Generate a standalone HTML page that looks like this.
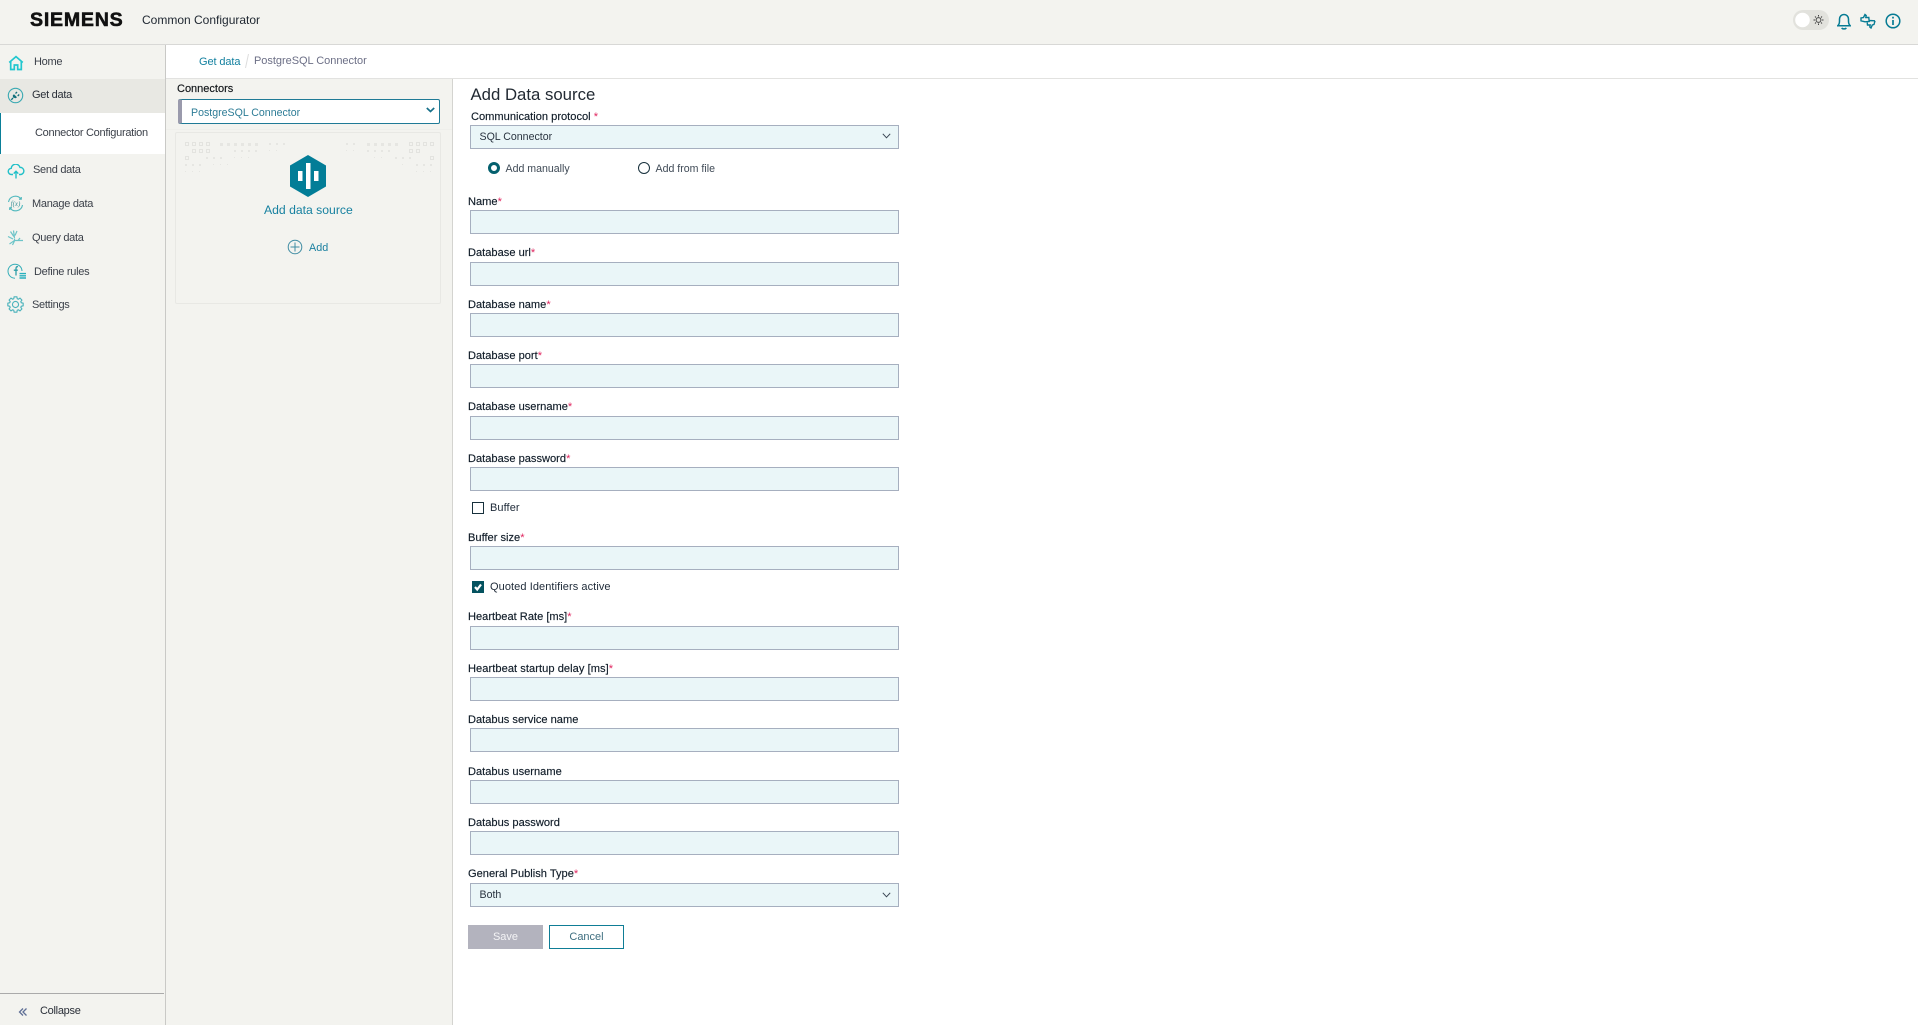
<!DOCTYPE html>
<html lang="en"><head><meta charset="utf-8"><title>Common Configurator</title>
<style>
html,body{margin:0;padding:0;background:#fff}
#p{position:relative;width:1918px;height:1025px;overflow:hidden;background:#fff;font-family:"Liberation Sans",sans-serif}
#p div,#p span.t,#p svg{position:absolute;display:block}
.t{white-space:nowrap;line-height:16px;height:16px;margin-top:1px}
.n{font-size:11px;letter-spacing:-.28px;color:#3a3f48}
.l{font-size:11.1px;color:#101c28;left:468px;-webkit-text-stroke:.15px #101c28}
.l i{font-style:normal;color:#e0245e;-webkit-text-stroke:0}
.f{left:470px;width:429px;height:24px;box-sizing:border-box;background:#eaf6f8;border:1px solid #a6afbf}
.v{font-size:10.6px;color:#2a3440}
.c{font-size:11px;letter-spacing:.08px;color:#1e2a38}
</style></head><body><div id="p">
<div style="left:0;top:0;width:1918px;height:44px;background:#f3f3ef"></div>
<div style="left:0;top:44px;width:1918px;height:1px;background:#d8d8d6"></div>
<div style="left:0;top:45px;width:165px;height:980px;background:#f3f3ef"></div>
<div style="left:165px;top:45px;width:1px;height:980px;background:#c9c9c6"></div>
<div style="left:0;top:79px;width:165px;height:34px;background:#e8e8e3"></div>
<div style="left:0;top:113px;width:165px;height:41px;background:#fff"></div>
<div style="left:0;top:113px;width:1px;height:41px;background:#0a7f98"></div>
<div style="left:0;top:993px;width:164px;height:1px;background:#aaaaaa"></div>
<div style="left:166px;top:78px;width:1752px;height:1px;background:#e2e2e0"></div>
<div style="left:166px;top:79px;width:286px;height:946px;background:#f3f3ef"></div>
<div style="left:452px;top:79px;width:1px;height:946px;background:#d4d4d0"></div>
<div style="left:166px;top:129px;width:286px;height:1px;background:#efefeb"></div>

<span class="t" style="left:30px;top:11px;line-height:17px;height:17px;font-size:19.6px;font-weight:700;letter-spacing:.75px;color:#111;-webkit-text-stroke:.55px #111">SIEMENS</span>
<span class="t" style="left:142px;top:11px;font-size:12px;color:#1e2630">Common Configurator</span>

<span class="t n" style="left:34px;top:53px">Home</span>
<span class="t n" style="left:32px;top:86px;color:#2a2f38">Get data</span>
<span class="t n" style="left:35px;top:124px">Connector Configuration</span>
<span class="t n" style="left:33px;top:161px">Send data</span>
<span class="t n" style="left:32px;top:195px">Manage data</span>
<span class="t n" style="left:32px;top:229px">Query data</span>
<span class="t n" style="left:34px;top:263px">Define rules</span>
<span class="t n" style="left:32px;top:296px">Settings</span>
<span class="t n" style="left:40px;top:1002px;color:#2a2f38">Collapse</span>

<svg style="left:8px;top:55px" width="16" height="16" viewBox="0 0 16 16" fill="none" stroke="#22c7cf" stroke-width="1.7"><path d="M1.200 7.500 8 1.600 14.800 7.500M2.700 6.600V14.500H6.300V10H9.700V14.500H13.300V6.600"/></svg>
<svg style="left:7px;top:87px" width="17" height="17" viewBox="0 0 17 17" fill="none" stroke="#3aa9b2" stroke-width="1.1"><circle cx="8.500" cy="8.500" r="7.200"/><path d="M7 7.300 10 10.300 8.700 11.300 6 10.500 5.800 8.300z" fill="#13707c" stroke="none"/><path d="M6 11 4.300 12.800M8.500 6.500 10 5M10.700 9 12.200 7.500" stroke="#13707c" stroke-width="1.300"/></svg>
<svg style="left:7px;top:164px" width="18" height="15" viewBox="0 0 18 15" fill="none" stroke="#22c0c8" stroke-width="1.400"><path d="M6 10.500H4.500a3.100 3.100 0 0 1-.3-6.200A4.500 4.500 0 0 1 13 3.400a3.500 3.500 0 0 1 .6 7.100H12M9 14.500V7.500M6.700 9.600 9 7.300l2.300 2.300"/></svg>
<svg style="left:7px;top:195px" width="17" height="17" viewBox="0 0 17 17" fill="none" stroke="#4fb8bd" stroke-width="1.100"><path d="M1.500 7A7 7 0 0 1 14 4M15.500 10A7 7 0 0 1 3 13M12 4.200h2.300V2M5 12.800H2.700V15"/><text x="8.500" y="11" font-size="7" font-style="italic" text-anchor="middle" fill="#3a8f96" stroke="none" font-family="Liberation Serif,serif">f(x)</text></svg>
<svg style="left:7px;top:229px" width="17" height="17" viewBox="0 0 17 17" fill="none" stroke="#6cc4c8" stroke-width="1.200"><path d="M6.500 1.500 7.500 9M3.500 2.500 6.800 7.500M10 2 8 6.500M1 7.500 6 10M8 11.500H16M7.500 9.500V11.500L2.500 15M7.500 12 5.500 16M11 11.500 13 9"/></svg>
<svg style="left:7px;top:263px" width="20" height="17" viewBox="0 0 20 17" fill="none" stroke="#35aeb8" stroke-width="1"><path d="M8 15.200A7 7 0 1 1 15 8"/><path d="M11 3.800C9.400 3.300 9 4.300 9 5.800V12.500M6.800 7.200h4" stroke="#2c9ea8" stroke-width="1.300"/><path d="M12.500 10.600h6.500M12.500 12.800h6.500M12.500 15h6.500" stroke="#27b0bd" stroke-width="1.400"/></svg>
<svg style="left:7px;top:296px" width="17" height="17" viewBox="0 0 24 24" fill="none" stroke="#4cb3bc" stroke-width="1.600"><circle cx="12" cy="12" r="4.300"/><path d="M9.510 3.870 10.090 1.170H13.910L14.490 3.870 15.990 4.500 18.310 2.990 21.010 5.690 19.500 8.010 20.130 9.510 22.830 10.090V13.910L20.130 14.490 19.500 15.990 21.010 18.310 18.310 21.010 15.990 19.500 14.490 20.130 13.910 22.830H10.090L9.510 20.130 8.010 19.500 5.690 21.010 2.990 18.310 4.500 15.990 3.870 14.490 1.170 13.910V10.090L3.870 9.510 4.500 8.010 2.990 5.690 5.690 2.990 8.010 4.500Z"/></svg>
<svg style="left:18px;top:1007px" width="10" height="10" viewBox="0 0 10 10" fill="none" stroke="#5f6f96" stroke-width="1.300"><path d="M5 1.500 1.500 5 5 8.500M8.500 1.500 5 5 8.500 8.500"/></svg>

<span class="t" style="left:199px;top:53px;font-size:11px;color:#1481a0;letter-spacing:-.1px">Get data</span>
<svg style="left:245px;top:54px" width="4" height="14" viewBox="0 0 4 14"><path d="M3.500 0 .5 14" stroke="#dddddd" stroke-width="1"/></svg>
<span class="t" style="left:254px;top:52px;font-size:11px;color:#6c6f86;letter-spacing:-.03px">PostgreSQL Connector</span>

<span class="t" style="left:177px;top:80px;font-size:11px;color:#101418;-webkit-text-stroke:.15px #101418">Connectors</span>
<div style="left:178px;top:99px;width:262px;height:25px;box-sizing:border-box;background:#fff;border:1px solid #1f7a96;border-left:4px solid #9a9aac;border-radius:2px"></div>
<span class="t" style="left:191px;top:104px;font-size:10.6px;color:#2d7c96">PostgreSQL Connector</span>
<svg style="left:426px;top:107px" width="9" height="6" viewBox="0 0 9 6" fill="none" stroke="#17708a" stroke-width="1.700"><path d="M.8 1 4.500 4.500 8.200 1"/></svg>

<div style="left:175px;top:132px;width:266px;height:172px;box-sizing:border-box;border:1px solid #e8e8e4;border-radius:2px"></div>
<svg style="left:176px;top:135px" width="264" height="60" fill="none">
<g stroke="#e3e3df" stroke-width="1"><path d="M9.500 7.500h3v3h-3zM16.500 7.500h3v3h-3zM23.500 7.500h3v3h-3zM30.500 7.500h3v3h-3zM16.500 14.500h3v3h-3zM23.500 14.500h3v3h-3zM247.500 7.500h3v3h-3zM254.500 7.500h3v3h-3zM233.500 7.500h3v3h-3zM240.500 7.500h3v3h-3zM240.500 14.500h3v3h-3zM233.500 14.500h3v3h-3zM30.500 14.500h3v3h-3zM254.500 21.500h3v3h-3zM9.500 21.500h3v3h-3z"/></g>
<g fill="#e6e6e2"><rect x="44" y="8" width="3" height="3"/><rect x="51" y="8" width="3" height="3"/><rect x="58" y="8" width="3" height="3"/><rect x="65" y="8" width="3" height="3"/><rect x="72" y="8" width="3" height="3"/><rect x="79" y="8" width="3" height="3"/><rect x="93" y="8" width="2" height="2"/><rect x="100" y="8" width="2" height="2"/><rect x="107" y="8" width="2" height="2"/><rect x="170" y="8" width="2" height="2"/><rect x="177" y="8" width="2" height="2"/><rect x="191" y="8" width="3" height="3"/><rect x="198" y="8" width="3" height="3"/><rect x="205" y="8" width="3" height="3"/><rect x="212" y="8" width="3" height="3"/><rect x="219" y="8" width="3" height="3"/><rect x="58" y="15" width="2" height="2"/><rect x="65" y="15" width="2" height="2"/><rect x="72" y="15" width="2" height="2"/><rect x="79" y="15" width="2" height="2"/><rect x="93" y="15" width="1" height="1"/><rect x="100" y="15" width="1" height="1"/><rect x="170" y="15" width="1" height="1"/><rect x="177" y="15" width="1" height="1"/><rect x="191" y="15" width="2" height="2"/><rect x="198" y="15" width="2" height="2"/><rect x="205" y="15" width="2" height="2"/><rect x="212" y="15" width="2" height="2"/><rect x="30" y="22" width="2" height="2"/><rect x="37" y="22" width="2" height="2"/><rect x="44" y="22" width="2" height="2"/><rect x="58" y="22" width="1" height="1"/><rect x="65" y="22" width="1" height="1"/><rect x="72" y="22" width="1" height="1"/><rect x="198" y="22" width="1" height="1"/><rect x="205" y="22" width="1" height="1"/><rect x="219" y="22" width="2" height="2"/><rect x="226" y="22" width="2" height="2"/><rect x="233" y="22" width="2" height="2"/><rect x="9" y="29" width="2" height="2"/><rect x="16" y="29" width="2" height="2"/><rect x="23" y="29" width="2" height="2"/><rect x="37" y="29" width="1" height="1"/><rect x="44" y="29" width="1" height="1"/><rect x="51" y="29" width="1" height="1"/><rect x="226" y="29" width="1" height="1"/><rect x="240" y="29" width="2" height="2"/><rect x="247" y="29" width="2" height="2"/><rect x="254" y="29" width="2" height="2"/><rect x="9" y="36" width="1" height="1"/><rect x="16" y="36" width="1" height="1"/><rect x="23" y="36" width="1" height="1"/><rect x="240" y="36" width="1" height="1"/><rect x="247" y="36" width="1" height="1"/><rect x="254" y="36" width="1" height="1"/></g></svg>
<svg style="left:290px;top:155px" width="36" height="42" viewBox="0 0 36 42"><path d="M18 0 36 10.500V31.500L18 42 0 31.500V10.500z" fill="#027d97"/><path d="M8 16h4.500v10H8zM16 8h4.500v26H16zM24 16h4.500v10H24z" fill="#fff"/></svg>
<span class="t" style="left:264px;top:201px;width:88px;text-align:center;font-size:12.2px;color:#1781a0">Add data source</span>
<svg style="left:287px;top:239px" width="16" height="16" viewBox="0 0 16 16" fill="none" stroke="#3f8ca3" stroke-width="1"><circle cx="8" cy="8" r="6.800"/><path d="M8 3.500v9M3.500 8h9"/></svg>
<span class="t" style="left:309px;top:239px;font-size:10.800px;color:#1b80a0">Add</span>

<svg style="left:1793px;top:10px" width="36" height="20" viewBox="0 0 36 20"><rect width="36" height="20" rx="10" fill="#e2e2dd"/><circle cx="9.500" cy="10" r="7.300" fill="#fff"/><g stroke="#444" fill="none" stroke-width="1"><circle cx="25.500" cy="10" r="2.400"/><path d="M25.500 5v1.500M25.500 13.500V15M20.500 10H22M29 10h1.500M22 6.500l1 1M28 12.500l1 1M22 13.500l1-1M28 7.500l1-1"/></g></svg>
<svg style="left:1837px;top:13px" width="14" height="17" viewBox="0 0 14 17" fill="none" stroke="#067b94" stroke-width="1.500"><path d="M.8 12.700C2.300 11.400 2.500 10.300 2.500 8V6a4.500 4.500 0 0 1 9 0v2c0 2.300.2 3.400 1.700 4.700zM4.800 14.800c.6 1.500 3.800 1.500 4.400 0"/></svg>
<svg style="left:1860px;top:13px" width="16" height="16" viewBox="0 0 16 16" fill="none" stroke="#067b94" stroke-width="1.400"><path d="M1 7.800V5L3.500 4.500 5 1.500 6.200 2.500 5.800 4.500H8.800L9.200 8.500 5 8.800zM15 7.800 14 11.500 12.300 12 11 15 9.800 14 10.200 12H7.500L7.200 9.500M9.200 7.500 15 7.800"/></svg>
<svg style="left:1885px;top:13px" width="16" height="16" viewBox="0 0 16 16" fill="none" stroke="#067b94" stroke-width="1.500"><circle cx="8" cy="8" r="6.800"/><path d="M8 7v5M8 3.700v1.800" stroke-width="1.700"/></svg>

<span class="t" style="left:470.500px;top:85px;height:18px;line-height:18px;font-size:16.75px;color:#222a33">Add Data source</span>
<span class="t l" style="left:471px;top:108px">Communication protocol <i>*</i></span>
<div class="f" style="top:125px"></div>
<span class="t v" style="left:479.500px;top:128px">SQL Connector</span>
<svg style="left:882px;top:133px" width="9" height="6" viewBox="0 0 9 6" fill="none" stroke="#3a4654" stroke-width="1"><path d="M.8.800 4.500 4.800 8.200.800"/></svg>
<div style="left:488px;top:162px;width:12px;height:12px;box-sizing:border-box;border:3.500px solid #04606e;border-radius:50%;background:#fff"></div>
<span class="t" style="left:505.500px;top:160px;font-size:10.600px;color:#3f4a56">Add manually</span>
<div style="left:638px;top:162px;width:12px;height:12px;box-sizing:border-box;border:1px solid #17303c;border-radius:50%;background:#fff"></div>
<span class="t" style="left:655.500px;top:160px;font-size:10.600px;color:#3f4a56">Add from file</span>

<span class="t l" style="top:193px">Name<i>*</i></span><div class="f" style="top:210px"></div>
<span class="t l" style="top:244px">Database url<i>*</i></span><div class="f" style="top:262px"></div>
<span class="t l" style="top:296px">Database name<i>*</i></span><div class="f" style="top:313px"></div>
<span class="t l" style="top:347px">Database port<i>*</i></span><div class="f" style="top:364px"></div>
<span class="t l" style="top:398px">Database username<i>*</i></span><div class="f" style="top:416px"></div>
<span class="t l" style="top:450px">Database password<i>*</i></span><div class="f" style="top:467px"></div>
<div style="left:472px;top:502px;width:12px;height:12px;box-sizing:border-box;border:1px solid #17303c;background:#fff"></div>
<span class="t c" style="left:490px;top:499px">Buffer</span>
<span class="t l" style="top:529px">Buffer size<i>*</i></span><div class="f" style="top:546px"></div>
<div style="left:472px;top:581px;width:12px;height:12px;background:#04525f"></div>
<svg style="left:472px;top:581px" width="12" height="12" viewBox="0 0 12 12" fill="none" stroke="#fff" stroke-width="2.200"><path d="M3 6 5.200 8.500 9 3.500"/></svg>
<span class="t c" style="left:490px;top:578px">Quoted Identifiers active</span>
<span class="t l" style="top:608px">Heartbeat Rate [ms]<i>*</i></span><div class="f" style="top:626px"></div>
<span class="t l" style="top:660px;letter-spacing:.05px">Heartbeat startup delay [ms]<i>*</i></span><div class="f" style="top:677px"></div>
<span class="t l" style="top:711px">Databus service name</span><div class="f" style="top:728px"></div>
<span class="t l" style="top:763px">Databus username</span><div class="f" style="top:780px"></div>
<span class="t l" style="top:814px">Databus password</span><div class="f" style="top:831px"></div>
<span class="t l" style="top:865px">General Publish Type<i>*</i></span><div class="f" style="top:883px"></div>
<span class="t v" style="left:479.500px;top:886px">Both</span>
<svg style="left:882px;top:892px" width="9" height="6" viewBox="0 0 9 6" fill="none" stroke="#3a4654" stroke-width="1"><path d="M.8.800 4.500 4.800 8.200.800"/></svg>

<div style="left:468px;top:925px;width:75px;height:24px;background:#b3b3be"></div>
<span class="t" style="left:468px;top:928px;width:75px;text-align:center;font-size:11px;color:#f4f4f6">Save</span>
<div style="left:549px;top:925px;width:75px;height:24px;box-sizing:border-box;border:1px solid #0f7d96;background:#fff"></div>
<span class="t" style="left:549px;top:928px;width:75px;text-align:center;font-size:11px;color:#3f6f80">Cancel</span>
</div></body></html>
